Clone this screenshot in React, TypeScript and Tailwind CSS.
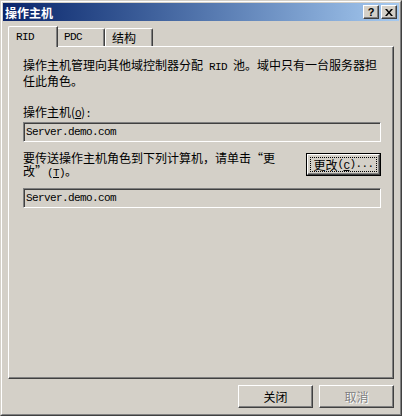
import React from "react";

const Asc = ({ children }: { children: React.ReactNode }) => (
  <span className="font-['Liberation_Mono',monospace] text-[11px] tracking-[-0.6px] leading-[13px]">{children}</span>
);

const Raised = ({ children, isDefault, disabled }: { children: React.ReactNode; isDefault?: boolean; disabled?: boolean }) => {
  const inner = (
    <div className="h-full w-full border border-t-white border-l-white border-r-[#404040] border-b-[#404040] shadow-[inset_-1px_-1px_0_#808080] flex items-center justify-center">
      {isDefault ? (
        <div className="px-[2px] h-[15px] flex items-center border border-dotted border-black">{children}</div>
      ) : disabled ? (
        <span className="text-[#808080] [text-shadow:1px_1px_0_#ffffff]">{children}</span>
      ) : (
        children
      )}
    </div>
  );
  return (
    <div className={`w-[75px] h-[23px] shrink-0 ${isDefault ? "border border-black" : ""}`}>{inner}</div>
  );
};

const TextBox = ({ value }: { value: string }) => (
  <div className="h-[20px] border border-t-[#808080] border-l-[#808080] border-b-white border-r-white shadow-[inset_1px_1px_0_#404040] flex items-center pl-[2px]">
    <Asc>{value}</Asc>
  </div>
);

export default function App() {
  return (
    <div className="w-[402px] h-[416px] bg-[#d4d0c8] text-black text-[12px] leading-[13px] font-['Noto_Sans_CJK_SC',sans-serif] border border-t-[#d4d0c8] border-l-[#d4d0c8] border-r-[#404040] border-b-[#404040]">
      <div className="h-full border border-t-white border-l-white border-r-[#808080] border-b-[#808080] p-px flex flex-col">
        {/* Title bar */}
        <div className="h-[18px] bg-gradient-to-r from-[#0a246a] to-[#a6caf0] flex items-center pl-[2px] pr-[2px]">
          <span className="text-white font-bold text-[12px]">操作主机</span>
          <div className="ml-auto flex gap-[2px]">
            <div className="w-[16px] h-[14px] bg-[#d4d0c8] border border-t-white border-l-white border-r-[#404040] border-b-[#404040] shadow-[inset_-1px_-1px_0_#808080] flex items-center justify-center">
              <span className="font-['Liberation_Sans',sans-serif] font-bold text-[11px] leading-none">?</span>
            </div>
            <div className="w-[16px] h-[14px] bg-[#d4d0c8] border border-t-white border-l-white border-r-[#404040] border-b-[#404040] shadow-[inset_-1px_-1px_0_#808080] flex items-center justify-center">
              <svg width="8" height="7" viewBox="0 0 8 7">
                <path d="M0 0h2l2 2.5L6 0h2L5 3.5 8 7H6L4 4.5 2 7H0l3-3.5z" fill="#000" />
              </svg>
            </div>
          </div>
        </div>

        <div className="px-[5px] pt-[5px] flex flex-col">
          {/* Tabs */}
          <div className="flex items-end h-[20px]">
            <div className="relative z-10 -mb-px h-[21px] w-[50px] bg-[#d4d0c8] border-l border-t border-white rounded-tl-[2px] border-r border-r-[#404040] shadow-[inset_-1px_0_0_#808080] flex items-start pt-[4px] pl-[7px]">
              <Asc>RID</Asc>
            </div>
            <div className="h-[18px] w-[47px] border-t border-white border-r border-r-[#404040] shadow-[inset_-1px_0_0_#808080] rounded-tr-[2px] flex items-center pl-[6px]">
              <Asc>PDC</Asc>
            </div>
            <div className="h-[18px] w-[48px] border-l border-t border-white rounded-tl-[2px] border-r border-r-[#404040] shadow-[inset_-1px_0_0_#808080] rounded-tr-[2px] flex items-center pl-[6px]">
              结构
            </div>
          </div>

          {/* Panel */}
          <div className="h-[333px] border border-t-white border-l-white border-r-[#404040] border-b-[#404040] shadow-[inset_-1px_-1px_0_#808080] pt-[11px] pl-[14px] pr-[12px] flex flex-col">
            <p className="h-[26px]">
              操作主机管理向其他域控制器分配<Asc> RID </Asc>池。域中只有一台服务器担
              <br />
              任此角色。
            </p>
            <p className="h-[13px] mt-[21px]">
              操作主机(<span className="underline"><Asc>O</Asc></span>)<Asc>:</Asc>
            </p>
            <div className="mt-[4px]">
              <TextBox value="Server.demo.com" />
            </div>
            <div className="mt-[9px] flex items-start justify-between">
              <p className="h-[26px]">
                要传送操作主机角色到下列计算机，请单击“更
                <br />
                改”<Asc>(</Asc><span className="underline"><Asc>T</Asc></span><Asc>)</Asc>。
              </p>
              <div className="mt-[2px]">
                <Raised isDefault>
                  更改<Asc>(</Asc><span className="underline"><Asc>C</Asc></span><Asc>)...</Asc>
                </Raised>
              </div>
            </div>
            <div className="mt-[11px]">
              <TextBox value="Server.demo.com" />
            </div>
          </div>

          {/* Bottom buttons */}
          <div className="mt-[6px] flex justify-end gap-[6px]">
            <Raised>关闭</Raised>
            <Raised disabled>取消</Raised>
          </div>
        </div>
      </div>
    </div>
  );
}
